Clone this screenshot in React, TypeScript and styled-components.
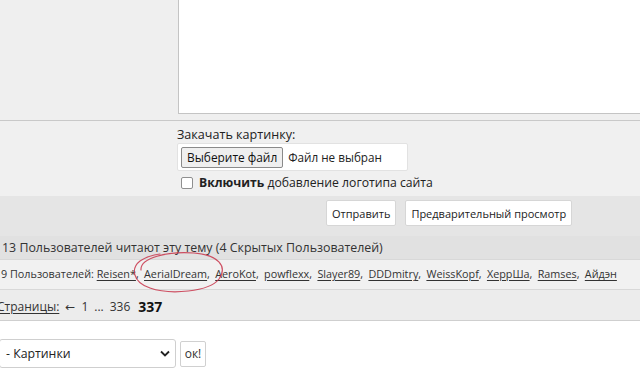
import React from "react";
import styled, { createGlobalStyle } from "styled-components";

const Global = createGlobalStyle`
  html, body { margin: 0; padding: 0; background: #ffffff; }
  body { font-family: "Open Sans", "Noto Sans", "DejaVu Sans", sans-serif; color: #222; }
  #root { width: 640px; height: 372px; overflow: hidden; }
`;

const Page = styled.div`
  position: relative;
  width: 640px;
  height: 372px;
  overflow: hidden;
  background: #ffffff;
  font-size: 12px;
`;

const EditorRow = styled.div`
  display: flex;
  height: 120px;
  background: #efefef;
  border-bottom: 1px solid #c9c9c9;
`;

const SideCol = styled.div`
  width: 178px;
  flex: none;
`;

const TextArea = styled.div`
  flex: 1;
  height: 113px;
  background: #ffffff;
  border-left: 1px solid #c4c4c4;
  border-bottom: 1px solid #c4c4c4;
`;

const UploadSection = styled.div`
  display: flex;
  flex-direction: column;
  align-items: flex-start;
  height: 75px;
  padding-left: 177px;
  background: #f0f0f0;
  box-sizing: border-box;
  padding-top: 5px;
`;

const Label = styled.div`
  font-size: 12.6px;
  line-height: 17px;
  color: #222;
`;

const FileBox = styled.div`
  display: flex;
  align-items: center;
  gap: 5px;
  width: 231px;
  height: 28px;
  box-sizing: border-box;
  padding: 0 3px;
  background: #ffffff;
  border: 1px solid #e2e2e2;
  border-radius: 2px;
  font-size: 11.7px;
`;

const FileButton = styled.button`
  height: 21px;
  padding: 0 5px;
  font-family: inherit;
  font-size: 11.9px;
  color: #111;
  background: #efefef;
  border: 1px solid #8a8a8a;
  border-radius: 2px;
`;

const CheckRow = styled.label`
  display: flex;
  align-items: center;
  gap: 6px;
  margin-top: 3px;
  padding-left: 4px;
  font-size: 12.2px;
  color: #222;
`;

const Check = styled.span`
  width: 10px;
  height: 10px;
  border: 1px solid #8f8f8f;
  border-radius: 2px;
  background: #fff;
`;

const ActionBar = styled.div`
  display: flex;
  gap: 9px;
  height: 40px;
  padding: 4px 0 0 326px;
  box-sizing: border-box;
  background: #e5e5e5;
`;

const ActionButton = styled.button`
  height: 26px;
  padding: 0 5px;
  font-family: inherit;
  font-size: 11px;
  color: #222;
  background: #ffffff;
  border: 1px solid #d6d6d6;
  border-radius: 2px;
`;

const InfoRow = styled.div<{ $bg: string; $h: number }>`
  display: flex;
  align-items: center;
  height: ${(p) => p.$h}px;
  box-sizing: border-box;
  padding-left: 1px;
  background: ${(p) => p.$bg};
  color: #333;
  white-space: nowrap;
`;

const ReadersRow = styled(InfoRow)`
  font-size: 12.4px;
  padding-left: 2px;
`;

const UsersRow = styled(InfoRow)`
  border-top: 1px solid #d8d8d8;
  border-bottom: 1px solid #d8d8d8;
  font-size: 10.8px;
  padding-bottom: 2px;
`;

const UserLink = styled.a`
  color: #333;
  text-decoration: underline;
  text-underline-offset: 2px;
`;

const Separator = styled.span`
  margin-right: 2.5px;
`;

const PagesRow = styled(InfoRow)`
  gap: 6px;
  border-bottom: 1px solid #cfcfcf;
  padding-left: 0;
  padding-top: 3px;
  margin-left: -3px;
  font-size: 12px;
`;

const PagesLabel = styled.span`
  text-decoration: underline;
  text-underline-offset: 2px;
`;

const Current = styled.span`
  font-weight: bold;
  font-size: 14px;
  color: #111;
  margin-left: 2px;
`;

const JumpRow = styled.div`
  display: flex;
  align-items: center;
  gap: 4px;
  padding-top: 18px;
  margin-left: -1px;
`;

const SelectWrap = styled.div`
  position: relative;
  width: 177px;
  height: 29px;
`;

const Select = styled.div`
  display: flex;
  align-items: center;
  height: 29px;
  box-sizing: border-box;
  padding-left: 6px;
  border: 1px solid #cfcfcf;
  border-radius: 3px;
  background: #fff;
  font-size: 12.3px;
  color: #222;
`;

const Chevron = styled.svg`
  position: absolute;
  right: 6px;
  top: 11px;
`;

const OkButton = styled.button`
  height: 26px;
  width: 26px;
  padding: 0;
  font-family: inherit;
  font-size: 12px;
  color: #333;
  background: #fff;
  border: 1px solid #d0d0d0;
  border-radius: 2px;
`;

const Annotation = styled.svg`
  position: absolute;
  left: 0;
  top: 0;
  pointer-events: none;
`;

const users = [
  "Reisen*",
  "AerialDream",
  "AeroKot",
  "powflexx",
  "Slayer89",
  "DDDmitry",
  "WeissKopf",
  "XeppШа",
  "Ramses",
  "Айдэн",
];

export default function App() {
  return (
    <>
      <Global />
      <Page>
        <EditorRow>
          <SideCol />
          <TextArea />
        </EditorRow>
        <UploadSection>
          <Label>Закачать картинку:</Label>
          <FileBox>
            <FileButton>Выберите файл</FileButton>
            <span>Файл не выбран</span>
          </FileBox>
          <CheckRow>
            <Check />
            <span>
              <b>Включить</b> добавление логотипа сайта
            </span>
          </CheckRow>
        </UploadSection>
        <ActionBar>
          <ActionButton>Отправить</ActionButton>
          <ActionButton>Предварительный просмотр</ActionButton>
        </ActionBar>
        <ReadersRow $bg="#e1e1e1" $h={23}>
          13 Пользователей читают эту тему (4 Скрытых Пользователей)
        </ReadersRow>
        <UsersRow $bg="#f1f1f1" $h={31}>
          <span>9 Пользователей:&nbsp;</span>
          {users.map((u, i) => (
            <React.Fragment key={u}>
              <UserLink>{u}</UserLink>
              {i < users.length - 1 ? <Separator>,&nbsp;</Separator> : null}
            </React.Fragment>
          ))}
        </UsersRow>
        <PagesRow $bg="#ececec" $h={31}>
          <PagesLabel>Страницы:</PagesLabel>
          <span>←</span>
          <span>1</span>
          <span>...</span>
          <span>336</span>
          <Current>337</Current>
        </PagesRow>
        <JumpRow>
          <SelectWrap>
            <Select>- Картинки</Select>
            <Chevron width="10" height="7" viewBox="0 0 10 7">
              <path d="M1 1.5 L5 5.5 L9 1.5" fill="none" stroke="#222" strokeWidth="1.8" />
            </Chevron>
          </SelectWrap>
          <OkButton>ок!</OkButton>
        </JumpRow>
        <Annotation width="640" height="372" viewBox="0 0 640 372">
          <path
            d="M141 270 C 140 258, 167 251, 194 253 C 218 255, 228 266, 219 279 C 209 292, 170 295, 150 288 C 132 282, 131 268, 140 261 C 146 257, 153 255, 160 254"
            fill="none"
            stroke="#c8344a"
            strokeWidth="1.2"
            strokeLinecap="round"
            opacity="0.85"
          />
        </Annotation>
      </Page>
    </>
  );
}
